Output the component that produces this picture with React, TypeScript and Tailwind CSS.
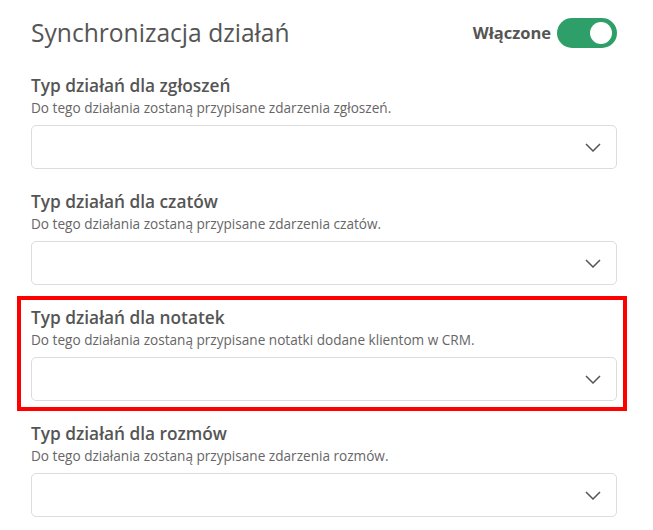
import React from 'react';

const sections = [
  { title: 'Typ działań dla zgłoszeń', desc: 'Do tego działania zostaną przypisane zdarzenia zgłoszeń.' },
  { title: 'Typ działań dla czatów', desc: 'Do tego działania zostaną przypisane zdarzenia czatów.' },
  { title: 'Typ działań dla notatek', desc: 'Do tego działania zostaną przypisane notatki dodane klientom w CRM.', marked: true },
  { title: 'Typ działań dla rozmów', desc: 'Do tego działania zostaną przypisane zdarzenia rozmów.' },
];

function Chevron() {
  return (
    <svg width="16" height="9" viewBox="0 0 16 9" fill="none" className="text-[#555]">
      <path d="M1 1l7 7 7-7" stroke="currentColor" strokeWidth="1.5" />
    </svg>
  );
}

function Section({ title, desc, marked }: { title: string; desc: string; marked?: boolean }) {
  return (
    <div className="relative">
      {marked && (
        <div className="pointer-events-none absolute -left-[14px] -right-[10px] -top-[10px] -bottom-[10px] border-[4px] border-[#ff0000]" />
      )}
      <div className="text-[17.3px] font-semibold leading-6 text-[#555]">{title}</div>
      <div className="text-[13.6px] leading-5 text-[#666]">{desc}</div>
      <div className="mt-[7px] flex h-[44px] items-center justify-end rounded-[5px] border border-[#dcdcdc] bg-white pr-[15px]">
        <Chevron />
      </div>
    </div>
  );
}

export default function App() {
  return (
    <div className="min-h-screen bg-white pl-[31px] pr-[36px] pt-[16px] font-['Open_Sans',sans-serif]">
      <div className="flex items-center justify-between">
        <h1 className="text-[24.6px] font-normal leading-[34px] text-[#555]">Synchronizacja działań</h1>
        <div className="flex items-center gap-[6px]">
          <span className="text-[16.5px] font-bold text-[#555]">Włączone</span>
          <div className="flex h-[30px] w-[60px] items-center justify-end rounded-full bg-[#2f9f69] pr-[5px]">
            <div className="h-[22px] w-[22px] rounded-full bg-white" />
          </div>
        </div>
      </div>
      <div className="mt-[24px] flex flex-col gap-[21px]">
        {sections.map((s) => (
          <Section key={s.title} {...s} />
        ))}
      </div>
    </div>
  );
}
